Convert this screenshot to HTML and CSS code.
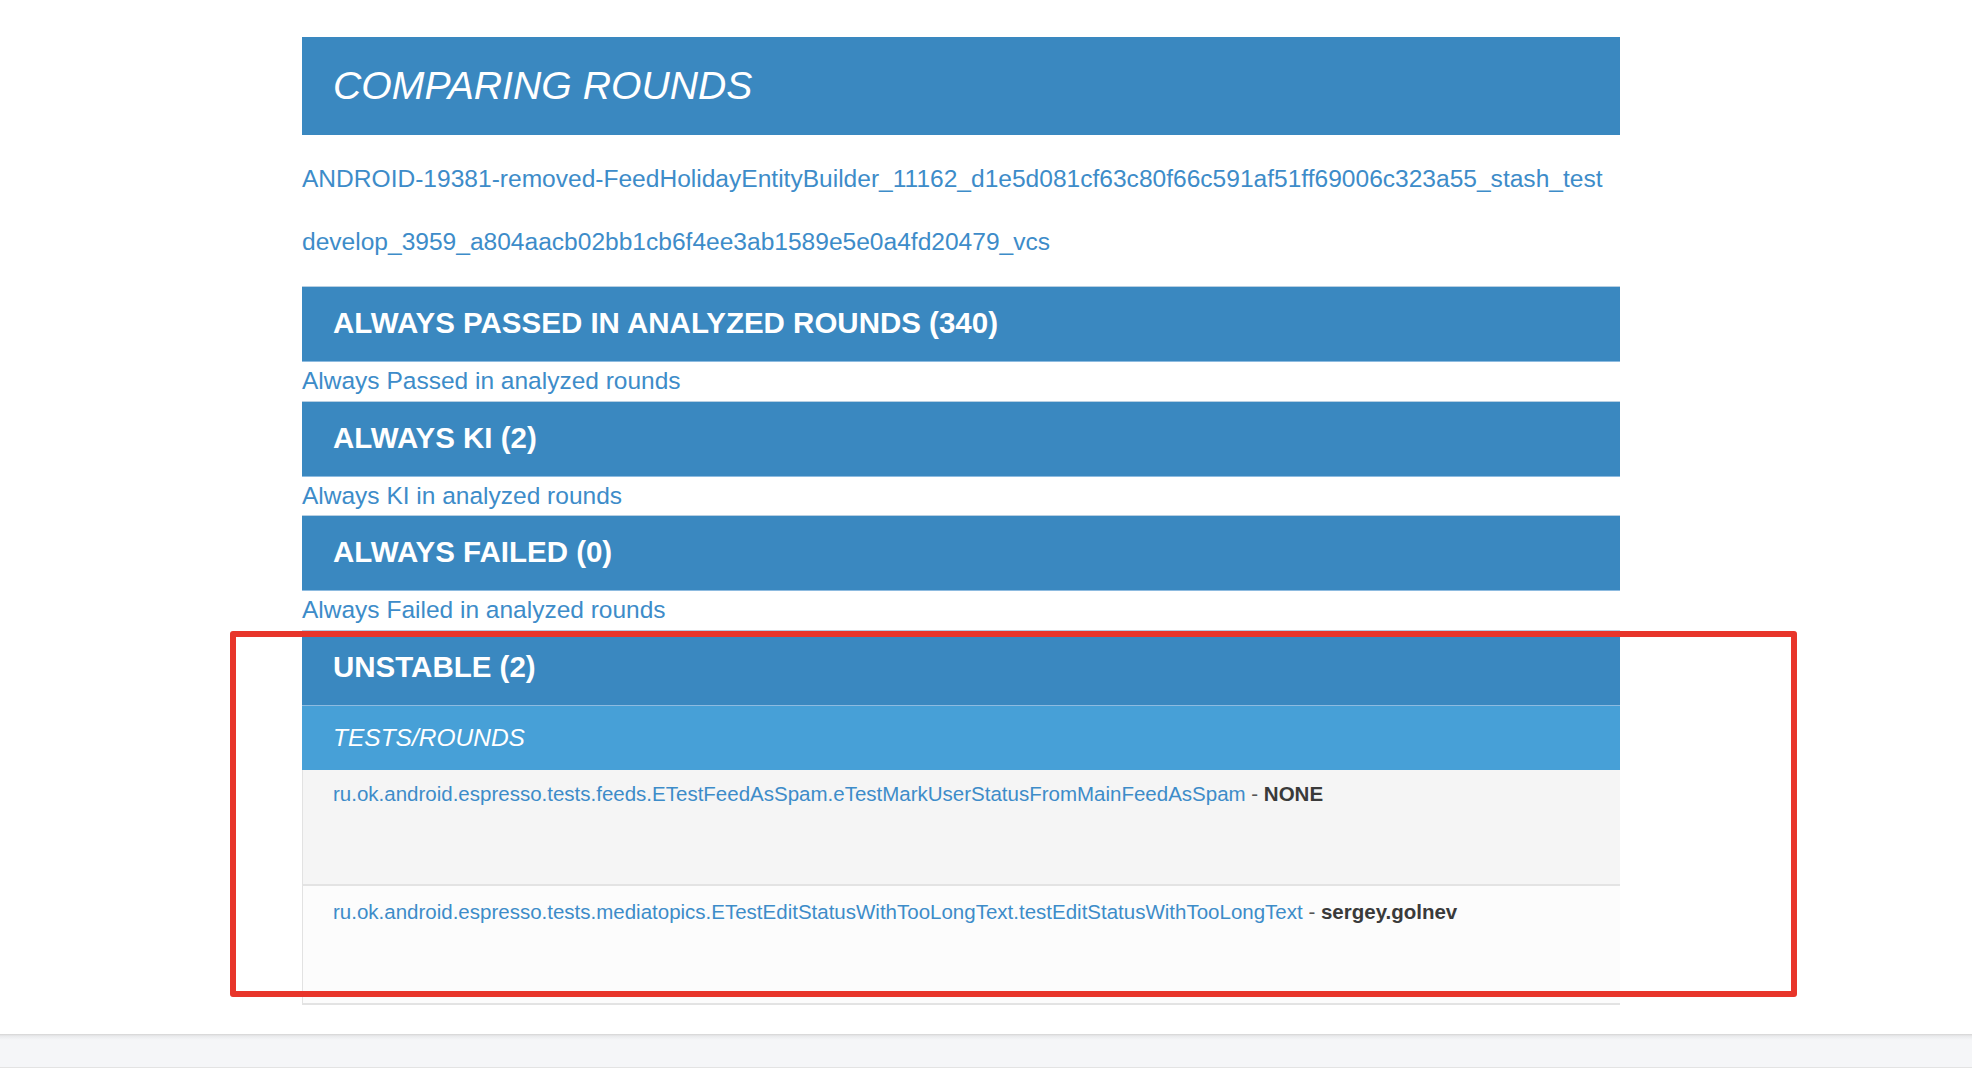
FILE: index.html
```html
<!DOCTYPE html>
<html lang="en">
<head>
<meta charset="utf-8">
<title>Comparing rounds</title>
<link rel="stylesheet" href="styles.css">
</head>
<body>
<div class="page">
  <main class="container">
    <div class="title-bar"><h1 class="title">COMPARING ROUNDS</h1></div>
    <div class="rounds">
      <a class="round-link" href="#">ANDROID-19381-removed-FeedHolidayEntityBuilder_11162_d1e5d081cf63c80f66c591af51ff69006c323a55_stash_test</a>
      <a class="round-link" href="#">develop_3959_a804aacb02bb1cb6f4ee3ab1589e5e0a4fd20479_vcs</a>
    </div>

    <section class="group">
      <h2 class="group-head">ALWAYS PASSED IN ANALYZED ROUNDS (340)</h2>
      <div class="group-desc"><a href="#">Always Passed in analyzed rounds</a></div>
    </section>
    <section class="group">
      <h2 class="group-head">ALWAYS KI (2)</h2>
      <div class="group-desc"><a href="#">Always KI in analyzed rounds</a></div>
    </section>
    <section class="group">
      <h2 class="group-head">ALWAYS FAILED (0)</h2>
      <div class="group-desc"><a href="#">Always Failed in analyzed rounds</a></div>
    </section>
    <section class="group">
      <h2 class="group-head">UNSTABLE (2)</h2>
      <div class="tests-head">TESTS/ROUNDS</div>
      <div class="test-row odd">
        <a href="#">ru.ok.android.espresso.tests.feeds.ETestFeedAsSpam.eTestMarkUserStatusFromMainFeedAsSpam</a><span class="dash"> - </span><b class="owner">NONE</b>
      </div>
      <div class="test-row even">
        <a href="#">ru.ok.android.espresso.tests.mediatopics.ETestEditStatusWithTooLongText.testEditStatusWithTooLongText</a><span class="dash"> - </span><b class="owner">sergey.golnev</b>
      </div>
    </section>
  </main>
  <div class="annotation"></div>
</div>
<footer class="footer"></footer>
</body>
</html>
```

FILE: styles.css
```css
html, body {
  margin: 0;
  padding: 0;
  background: #ffffff;
}
body {
  font-family: "Liberation Sans", Arial, Helvetica, sans-serif;
  color: #333333;
  height: 1070px;
  overflow: hidden;
}
a {
  color: #3d8cc9;
  text-decoration: none;
}
.page {
  position: relative;
}
.container {
  margin-left: 302px;
  width: 1318px;
  padding-top: 37px;
}
.title-bar {
  background: #3a88c0;
  height: 98px;
  display: flex;
  align-items: center;
  padding-left: 31px;
}
.title {
  margin: 0;
  font-size: 39.2px;
  font-style: italic;
  font-weight: normal;
  color: #ffffff;
  line-height: 1;
}
.rounds {
  display: flex;
  flex-direction: column;
  gap: 33px;
  padding: 29px 0;
}
.round-link {
  display: block;
  font-size: 24.55px;
  line-height: 30px;
}
.group-head {
  margin: 0;
  height: 72px;
  line-height: 72px;
  padding-bottom: 2px;
  background: #3a88c0;
  border-top: 1px solid #b7cfe2;
  border-bottom: 1px solid #8dbbe0;
  color: #ffffff;
  font-size: 29.5px;
  font-weight: bold;
  padding-left: 31px;
}
.group-desc {
  height: 38.5px;
  line-height: 38px;
  font-size: 24.5px;
}
.tests-head {
  background: #47a0d7;
  height: 64px;
  line-height: 64px;
  padding-left: 31px;
  color: #ffffff;
  font-size: 24.5px;
  font-style: italic;
}
.test-row {
  box-sizing: border-box;
  padding: 10px 0 0 30px;
  font-size: 20.5px;
  line-height: 28px;
  border-left: 1px solid #e2e2e2;
  border-bottom: 2px solid #e3e3e3;
}
.test-row.odd {
  background: #f5f5f5;
  height: 116px;
}
.test-row.even {
  background: #fcfcfc;
  height: 119px;
  padding-top: 12px;
}
.dash {
  color: #555555;
}
.owner {
  color: #3a3a3a;
}
.annotation {
  position: absolute;
  left: 230px;
  top: 631px;
  width: 1567px;
  height: 366px;
  box-sizing: border-box;
  border: 6px solid #e8352a;
  border-radius: 3px;
}
.footer {
  margin-top: 29px;
  height: 33px;
  background: linear-gradient(#d4d4d4 0, #e9eaec 2px, #f5f6f8 6px, #f5f6f8 100%);
  border-bottom: 1px solid #e3e3e3;
}
```
